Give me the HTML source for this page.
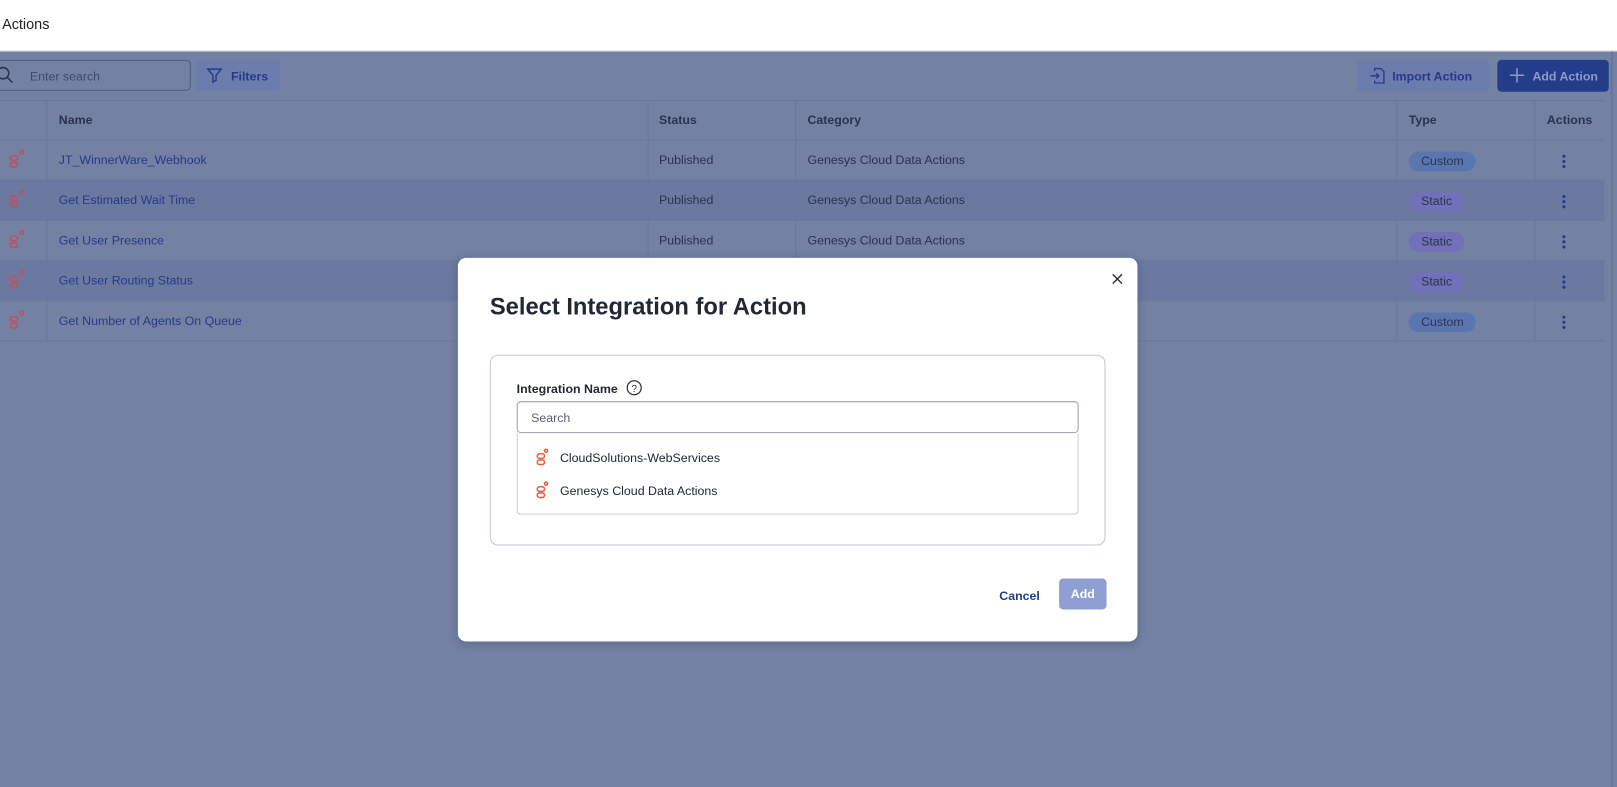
<!DOCTYPE html>
<html><head><style>
*{box-sizing:border-box;margin:0;padding:0}
body{width:1617px;height:763px;overflow:hidden;font-family:"Liberation Sans",sans-serif;background:#7381a3;position:relative;font-size:12px}
#w{position:absolute;left:0;top:0;width:1568px;height:740px;transform:scale(1.03125);transform-origin:0 0}
.hdr{position:absolute;left:0;top:0;width:1568px;height:50px;background:#fff;border-bottom:1px solid #d0d4de}
.hdr span{position:absolute;left:2px;top:15px;font-size:14px;color:#222}
.a{position:absolute}
.row{position:absolute;left:0;width:1556px;height:39px;border-bottom:1px solid #6a78a0}
.cell{position:absolute;top:0;height:39px;line-height:39px;color:#2a3350;font-size:12px}
.lnk{color:#263a8c}
.vl{position:absolute;top:97px;height:234px;width:1px;background:#6a78a0}
.pill{position:absolute;top:11px;height:19px;border-radius:10px;line-height:19px;padding:0 12px;font-size:12px;color:#2a3350}
.dots{position:absolute;left:1515px;top:14px;width:3px}
.dots i{display:block;width:3px;height:3px;border-radius:50%;background:#263a8c;margin-bottom:2px}
</style></head><body><div id="w">
<div class="hdr"><span>Actions</span></div>
<div class="a" style="left:-5px;top:58px;width:190px;height:30px;border:1px solid #4f5b7e;border-radius:4px"></div>
<svg class="a" style="left:-4px;top:64px" width="18" height="18" viewBox="0 0 18 18"><circle cx="7" cy="7" r="5.5" fill="none" stroke="#2a3350" stroke-width="1.5"/><path d="M11 11l5 5" stroke="#2a3350" stroke-width="1.5"/></svg>
<div class="a" style="left:29px;top:67px;font-size:12px;color:#3f4a70">Enter search</div>
<div class="a" style="left:190px;top:58px;width:82px;height:30px;background:#6c7cac;border-radius:4px"></div>
<svg class="a" style="left:200px;top:65px" width="16" height="16" viewBox="0 0 16 16"><path d="M1.5 2h13l-5 6v5l-3 1.5V8z" fill="none" stroke="#263a8c" stroke-width="1.4"/></svg>
<div class="a" style="left:224px;top:67px;font-weight:bold;color:#263a8c">Filters</div>
<div class="a" style="left:1316px;top:58px;width:128px;height:31px;background:#6c7cac;border-radius:4px"></div>
<svg class="a" style="left:1328px;top:65px" width="16" height="17" viewBox="0 0 16 17"><path d="M5 4V1.5h6l3 3V15.5H5V13M1 8.5h8M6.5 6l2.5 2.5-2.5 2.5" fill="none" stroke="#263a8c" stroke-width="1.3"/></svg>
<div class="a" style="left:1350px;top:67px;font-weight:bold;color:#263a8c">Import Action</div>
<div class="a" style="left:1452px;top:58px;width:108px;height:31px;background:#233d8a;border-radius:4px"></div>
<svg class="a" style="left:1464px;top:66px" width="14" height="14" viewBox="0 0 14 14"><path d="M7 0v14M0 7h14" stroke="#8e9bc8" stroke-width="1.5"/></svg>
<div class="a" style="left:1486px;top:67px;font-weight:bold;color:#8e9bc8">Add Action</div>
<div class="a" style="left:0;top:97px;width:1556px;height:1px;background:#6a78a0"></div>
<div class="row" style="top:97px"><div class="cell" style="left:57px;font-weight:bold">Name</div><div class="cell" style="left:639px;font-weight:bold">Status</div><div class="cell" style="left:783px;font-weight:bold">Category</div><div class="cell" style="left:1366px;font-weight:bold">Type</div><div class="cell" style="left:1500px;font-weight:bold">Actions</div></div>
<div class="row" style="top:136px"><div class="cell lnk" style="left:57px">JT_WinnerWare_Webhook</div><div class="cell" style="left:639px">Published</div><div class="cell" style="left:783px">Genesys Cloud Data Actions</div><div class="pill" style="left:1366px;background:#5a76b0">Custom</div><div class="dots"><i></i><i></i><i></i></div></div>
<div class="row" style="top:175px;background:#6b79a0"><div class="cell lnk" style="left:57px">Get Estimated Wait Time</div><div class="cell" style="left:639px">Published</div><div class="cell" style="left:783px">Genesys Cloud Data Actions</div><div class="pill" style="left:1366px;background:#7170b8">Static</div><div class="dots"><i></i><i></i><i></i></div></div>
<div class="row" style="top:214px"><div class="cell lnk" style="left:57px">Get User Presence</div><div class="cell" style="left:639px">Published</div><div class="cell" style="left:783px">Genesys Cloud Data Actions</div><div class="pill" style="left:1366px;background:#7170b8">Static</div><div class="dots"><i></i><i></i><i></i></div></div>
<div class="row" style="top:253px;background:#6b79a0"><div class="cell lnk" style="left:57px">Get User Routing Status</div><div class="pill" style="left:1366px;background:#7170b8">Static</div><div class="dots"><i></i><i></i><i></i></div></div>
<div class="row" style="top:292px"><div class="cell lnk" style="left:57px">Get Number of Agents On Queue</div><div class="pill" style="left:1366px;background:#5a76b0">Custom</div><div class="dots"><i></i><i></i><i></i></div></div>
<div class="vl" style="left:45px"></div><div class="vl" style="left:628px"></div><div class="vl" style="left:771px"></div><div class="vl" style="left:1354px"></div><div class="vl" style="left:1488px"></div>
<svg class="a" style="left:8px;top:145px" width="18" height="200" viewBox="0 0 18 200">
<g fill="none" stroke="#c0505e" stroke-width="1.5">
<g id="ic"><circle cx="13" cy="2.5" r="1.8"/><rect x="2" y="6" width="7" height="4.5" rx="2.2"/><rect x="2" y="12.5" width="7" height="4.5" rx="2.2"/></g>
<use href="#ic" y="39"/><use href="#ic" y="78"/><use href="#ic" y="117"/><use href="#ic" y="156"/></g></svg>
<div class="a" style="left:1562px;top:50px;width:2px;height:713px;background:#69769a"></div>

<div class="a" style="left:444px;top:250px;width:659px;height:372px;background:#fff;border-radius:8px;box-shadow:0 2px 8px rgba(40,50,80,.3)">
<div class="a" style="left:31px;top:34px;font-size:23px;font-weight:bold;color:#222833">Select Integration for Action</div>
<svg class="a" style="left:634px;top:15px" width="11" height="11" viewBox="0 0 11 11"><path d="M1 1l9 9M10 1l-9 9" stroke="#333" stroke-width="1.4"/></svg>
<div class="a" style="left:31px;top:94px;width:597px;height:185px;border:1px solid #c3c7d2;border-radius:8px"></div>
<div class="a" style="left:57px;top:120px;font-weight:bold;color:#222833">Integration Name</div>
<svg class="a" style="left:163px;top:118px" width="16" height="16" viewBox="0 0 16 16"><circle cx="8" cy="8" r="6.8" fill="none" stroke="#333" stroke-width="1.2"/><text x="8" y="12" text-anchor="middle" font-size="10" font-family="Liberation Sans" fill="#333">?</text></svg>
<div class="a" style="left:57px;top:139px;width:545px;height:31px;border:1px solid #9aa0ad;border-radius:4px"></div>
<div class="a" style="left:71px;top:148px;color:#5a6070">Search</div>
<div class="a" style="left:57px;top:170px;width:545px;height:79px;border:1px solid #c3c7d2;border-top:none;border-radius:0 0 4px 4px"></div>
<svg class="a" style="left:76px;top:185px" width="14" height="50" viewBox="0 0 14 50"><g fill="none" stroke="#e8603c" stroke-width="1.5"><g id="ic2"><circle cx="9.5" cy="2" r="1.5"/><rect x="1" y="5" width="7" height="4.5" rx="2.2"/><rect x="1" y="11" width="7" height="4.5" rx="2.2"/></g><use href="#ic2" y="32"/></g></svg>
<div class="a" style="left:99px;top:187px;color:#222833">CloudSolutions-WebServices</div>
<div class="a" style="left:99px;top:219px;color:#222833">Genesys Cloud Data Actions</div>
<div class="a" style="left:525px;top:321px;font-weight:bold;color:#233d8a">Cancel</div>
<div class="a" style="left:583px;top:311px;width:46px;height:30px;background:#8f9fd2;border-radius:4px;color:#fff;font-weight:bold;text-align:center;line-height:30px">Add</div>
</div>
</div></body></html>
